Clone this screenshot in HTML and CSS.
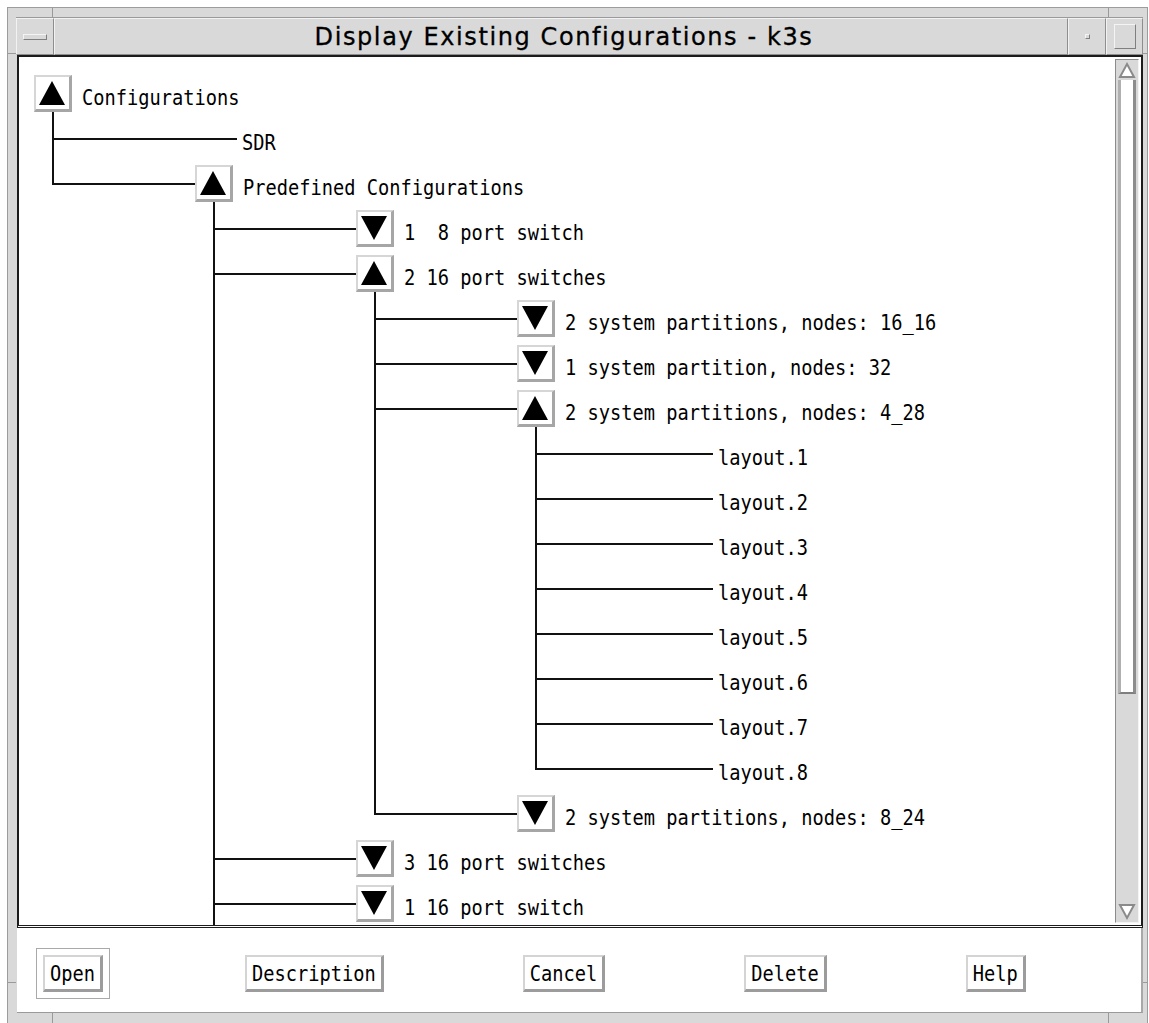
FILE: index.html
```html
<!DOCTYPE html>
<html lang="en">
<head>
    <meta charset="UTF-8">
    <title>Display Existing Configurations - k3s</title>
    <link rel="stylesheet" href="styles.css">
</head>
<body>
    <div class="frame">
        <!-- marcas de las esquinas del marco -->
        <span class="tick tick-top-l"></span>
        <span class="tick tick-top-r"></span>
        <span class="tick tick-bot-l"></span>
        <span class="tick tick-bot-r"></span>
        <span class="tick tick-left-t"></span>
        <span class="tick tick-left-b"></span>
        <span class="tick tick-right-t"></span>
        <span class="tick tick-right-b"></span>

        <!-- Barra de titulo -->
        <div class="titlebar">
            <div class="seg menu"><span class="menu-bar"></span></div>
            <div class="seg title">Display Existing Configurations - k3s</div>
            <div class="seg minimize"><span class="min-dot"></span></div>
            <div class="seg maximize"><span class="max-box"></span></div>
        </div>

        <!-- Arbol de configuraciones -->
        <div class="pane">
            <div class="tree">
                <div class="row">
                    <span class="node open"><span class="exp"><svg width="32" height="31"><polygon points="16,4 29,28 3,28"/></svg></span></span>
                    <span class="label">Configurations</span>
                </div>
                <div class="row">
                    <span class="cell tee"></span><span class="leaf-line"></span>
                    <span class="label leaf">SDR</span>
                </div>
                <div class="row">
                    <span class="cell elbow"></span>
                    <span class="node open"><span class="exp"><svg width="32" height="31"><polygon points="16,4 29,28 3,28"/></svg></span></span>
                    <span class="label">Predefined Configurations</span>
                </div>
                <div class="row">
                    <span class="cell"></span><span class="cell tee"></span>
                    <span class="node"><span class="exp"><svg width="32" height="31"><polygon points="3,4 29,4 16,28"/></svg></span></span>
                    <span class="label">1  8 port switch</span>
                </div>
                <div class="row">
                    <span class="cell"></span><span class="cell tee"></span>
                    <span class="node open"><span class="exp"><svg width="32" height="31"><polygon points="16,4 29,28 3,28"/></svg></span></span>
                    <span class="label">2 16 port switches</span>
                </div>
                <div class="row">
                    <span class="cell"></span><span class="cell pipe"></span><span class="cell tee"></span>
                    <span class="node"><span class="exp"><svg width="32" height="31"><polygon points="3,4 29,4 16,28"/></svg></span></span>
                    <span class="label">2 system partitions, nodes: 16_16</span>
                </div>
                <div class="row">
                    <span class="cell"></span><span class="cell pipe"></span><span class="cell tee"></span>
                    <span class="node"><span class="exp"><svg width="32" height="31"><polygon points="3,4 29,4 16,28"/></svg></span></span>
                    <span class="label">1 system partition, nodes: 32</span>
                </div>
                <div class="row">
                    <span class="cell"></span><span class="cell pipe"></span><span class="cell tee"></span>
                    <span class="node open"><span class="exp"><svg width="32" height="31"><polygon points="16,4 29,28 3,28"/></svg></span></span>
                    <span class="label">2 system partitions, nodes: 4_28</span>
                </div>
                <div class="row">
                    <span class="cell"></span><span class="cell pipe"></span><span class="cell pipe"></span><span class="cell tee"></span><span class="leaf-line short"></span>
                    <span class="label leaf">layout.1</span>
                </div>
                <div class="row">
                    <span class="cell"></span><span class="cell pipe"></span><span class="cell pipe"></span><span class="cell tee"></span><span class="leaf-line short"></span>
                    <span class="label leaf">layout.2</span>
                </div>
                <div class="row">
                    <span class="cell"></span><span class="cell pipe"></span><span class="cell pipe"></span><span class="cell tee"></span><span class="leaf-line short"></span>
                    <span class="label leaf">layout.3</span>
                </div>
                <div class="row">
                    <span class="cell"></span><span class="cell pipe"></span><span class="cell pipe"></span><span class="cell tee"></span><span class="leaf-line short"></span>
                    <span class="label leaf">layout.4</span>
                </div>
                <div class="row">
                    <span class="cell"></span><span class="cell pipe"></span><span class="cell pipe"></span><span class="cell tee"></span><span class="leaf-line short"></span>
                    <span class="label leaf">layout.5</span>
                </div>
                <div class="row">
                    <span class="cell"></span><span class="cell pipe"></span><span class="cell pipe"></span><span class="cell tee"></span><span class="leaf-line short"></span>
                    <span class="label leaf">layout.6</span>
                </div>
                <div class="row">
                    <span class="cell"></span><span class="cell pipe"></span><span class="cell pipe"></span><span class="cell tee"></span><span class="leaf-line short"></span>
                    <span class="label leaf">layout.7</span>
                </div>
                <div class="row">
                    <span class="cell"></span><span class="cell pipe"></span><span class="cell pipe"></span><span class="cell elbow"></span><span class="leaf-line short"></span>
                    <span class="label leaf">layout.8</span>
                </div>
                <div class="row">
                    <span class="cell"></span><span class="cell pipe"></span><span class="cell elbow"></span>
                    <span class="node"><span class="exp"><svg width="32" height="31"><polygon points="3,4 29,4 16,28"/></svg></span></span>
                    <span class="label">2 system partitions, nodes: 8_24</span>
                </div>
                <div class="row">
                    <span class="cell"></span><span class="cell tee"></span>
                    <span class="node"><span class="exp"><svg width="32" height="31"><polygon points="3,4 29,4 16,28"/></svg></span></span>
                    <span class="label">3 16 port switches</span>
                </div>
                <div class="row">
                    <span class="cell"></span><span class="cell tee"></span>
                    <span class="node"><span class="exp"><svg width="32" height="31"><polygon points="3,4 29,4 16,28"/></svg></span></span>
                    <span class="label">1 16 port switch</span>
                </div>
            </div>

            <!-- Barra de desplazamiento -->
            <div class="scrollbar">
                <div class="arrow"><svg width="20" height="19"><polygon points="10,3 17,16 3,16"/></svg></div>
                <div class="thumb"></div>
                <div class="trough"></div>
                <div class="arrow"><svg width="20" height="19"><polygon points="3,3 17,3 10,16"/></svg></div>
            </div>
        </div>

        <!-- Botones -->
        <div class="actions">
            <div class="default-ring"><button type="button" class="btn"><span class="btn-text">Open</span></button></div>
            <button type="button" class="btn"><span class="btn-text">Description</span></button>
            <button type="button" class="btn"><span class="btn-text">Cancel</span></button>
            <button type="button" class="btn"><span class="btn-text">Delete</span></button>
            <button type="button" class="btn"><span class="btn-text">Help</span></button>
        </div>
    </div>
</body>
</html>
```

FILE: styles.css
```css
body {
    margin: 0;
    padding: 7px 0 0 7px;
    background-color: #fff;
    font-family: "DejaVu Sans Mono", "Liberation Mono", monospace;
    font-size: 18.7px;
    color: #000;
    overflow: hidden;
}

/* Marco de la ventana */
.frame {
    position: relative;
    width: 1141px;
    height: 1020px;
    box-sizing: border-box;
    background-color: #d9d9d9;
    border: 1px solid #9c9c9c;
    border-bottom: none;
    padding: 9px 4px 0 8px;
}

.tick {
    position: absolute;
    background-color: #9a9a9a;
}

.tick-top-l, .tick-top-r { top: 0; width: 1px; height: 9px; }
.tick-top-l { left: 44px; }
.tick-top-r { left: 1100px; }
.tick-bot-l, .tick-bot-r { top: 1005px; width: 1px; height: 12px; }
.tick-bot-l { left: 44px; }
.tick-bot-r { left: 1100px; }
.tick-left-t, .tick-left-b { left: 0; width: 8px; height: 1px; }
.tick-right-t, .tick-right-b { left: 1135px; width: 4px; height: 1px; }
.tick-left-t, .tick-right-t { top: 45px; }
.tick-left-b, .tick-right-b { top: 974px; }

/* Barra de titulo */
.titlebar {
    display: flex;
    height: 38px;
    border-top: 1px solid #9a9a9a;
    box-sizing: border-box;
}

.seg {
    display: flex;
    align-items: center;
    justify-content: center;
    border: 1px solid;
    border-color: #f2f2f2 #8e8e8e #8e8e8e #f2f2f2;
}

.menu { width: 36px; }
.minimize { width: 36px; }
.maximize { width: 35px; }

.title {
    flex: 1;
    padding-left: 6px;
    font-family: "DejaVu Sans", "Liberation Sans", sans-serif;
    font-size: 24px;
    letter-spacing: 1.6px;
    -webkit-text-stroke: 0.3px #000;
}

.menu-bar {
    width: 22px;
    height: 4px;
    border: 1px solid;
    border-color: #f4f4f4 #7f7f7f #7f7f7f #f4f4f4;
}

.min-dot {
    width: 3px;
    height: 3px;
    border: 1px solid;
    border-color: #f4f4f4 #7f7f7f #7f7f7f #f4f4f4;
}

.max-box {
    width: 20px;
    height: 23px;
    border: 1px solid;
    border-color: #f4f4f4 #7f7f7f #7f7f7f #f4f4f4;
}

/* Area del arbol */
.pane {
    display: flex;
    margin-left: 1px;
    height: 873px;
    box-sizing: border-box;
    background-color: #fff;
    border: 2px solid #1c1c1c;
    border-bottom: 3px double #1c1c1c;
}

.tree {
    flex: 1;
    overflow: hidden;
    padding: 14px 0 0 15px;
}

.row {
    display: flex;
    height: 45px;
}

.cell {
    width: 161px;
    flex: none;
}

.pipe {
    background: linear-gradient(#111, #111) 18px 0 / 2px 100% no-repeat;
}

.tee {
    background:
        linear-gradient(#111, #111) 18px 0 / 2px 100% no-repeat,
        linear-gradient(#111, #111) 18px 22px / 143px 2px no-repeat;
}

.elbow {
    background:
        linear-gradient(#111, #111) 18px 0 / 2px 24px no-repeat,
        linear-gradient(#111, #111) 18px 22px / 143px 2px no-repeat;
}

.leaf-line {
    width: 42px;
    flex: none;
    background: linear-gradient(#111, #111) 0 22px / 100% 2px no-repeat;
}

.leaf-line.short {
    width: 35px;
}

.node {
    width: 38px;
    flex: none;
    padding-top: 4px;
    box-sizing: border-box;
}

.node.open {
    background: linear-gradient(#111, #111) 18px 100% / 2px 50% no-repeat;
}

.exp {
    display: block;
    width: 38px;
    height: 37px;
    box-sizing: border-box;
    background-color: #fff;
    border-style: solid;
    border-width: 2px 3px 3px 2px;
    border-color: #d6d6d6 #a6a6a6 #a6a6a6 #d6d6d6;
}

.exp svg {
    display: block;
    fill: #000;
}

.label {
    align-self: center;
    margin-left: 10px;
    padding-top: 6px;
    white-space: pre;
    transform: scaleY(1.18);
}

.label.leaf {
    margin-left: 5px;
}

/* Barra de desplazamiento */
.scrollbar {
    display: flex;
    flex-direction: column;
    width: 24px;
    flex: none;
    margin: 2px 2px 2px 0;
    box-sizing: border-box;
    padding: 1px;
    background-color: #d9d9d9;
    border: 1px solid;
    border-color: #8c8c8c #f4f4f4 #f4f4f4 #8c8c8c;
}

.arrow {
    height: 19px;
    flex: none;
}

.arrow svg {
    display: block;
    fill: #fff;
    stroke: #8a8a8a;
    stroke-width: 2;
}

.thumb {
    height: 612px;
    flex: none;
    margin: 0 1px;
    background-color: #fff;
    border-left: 3px solid #b0b0b0;
    border-right: 3px solid #8d8d8d;
    border-bottom: 2px solid #7f7f7f;
}

.trough {
    flex: 1;
}

/* Botones */
.actions {
    display: flex;
    align-items: center;
    gap: 139px;
    height: 85px;
    margin-left: 1px;
    padding: 6px 0 0 19px;
    box-sizing: border-box;
    background-color: #fff;
    border-right: 2px solid #a8a8a8;
    border-bottom: 1px solid #9a9a9a;
}

.default-ring {
    margin-right: -4px;
    padding: 6px;
    border: 1px solid #a9a9a9;
}

.btn {
    display: block;
    height: 37px;
    margin: 0;
    padding: 2px 5px 0;
    font: inherit;
    color: #000;
    background-color: #fff;
    border-style: solid;
    border-width: 2px 3px 3px 2px;
    border-color: #d4d4d4 #9c9c9c #9c9c9c #d4d4d4;
}

.btn-text {
    display: inline-block;
    transform: scaleY(1.18);
}
```
